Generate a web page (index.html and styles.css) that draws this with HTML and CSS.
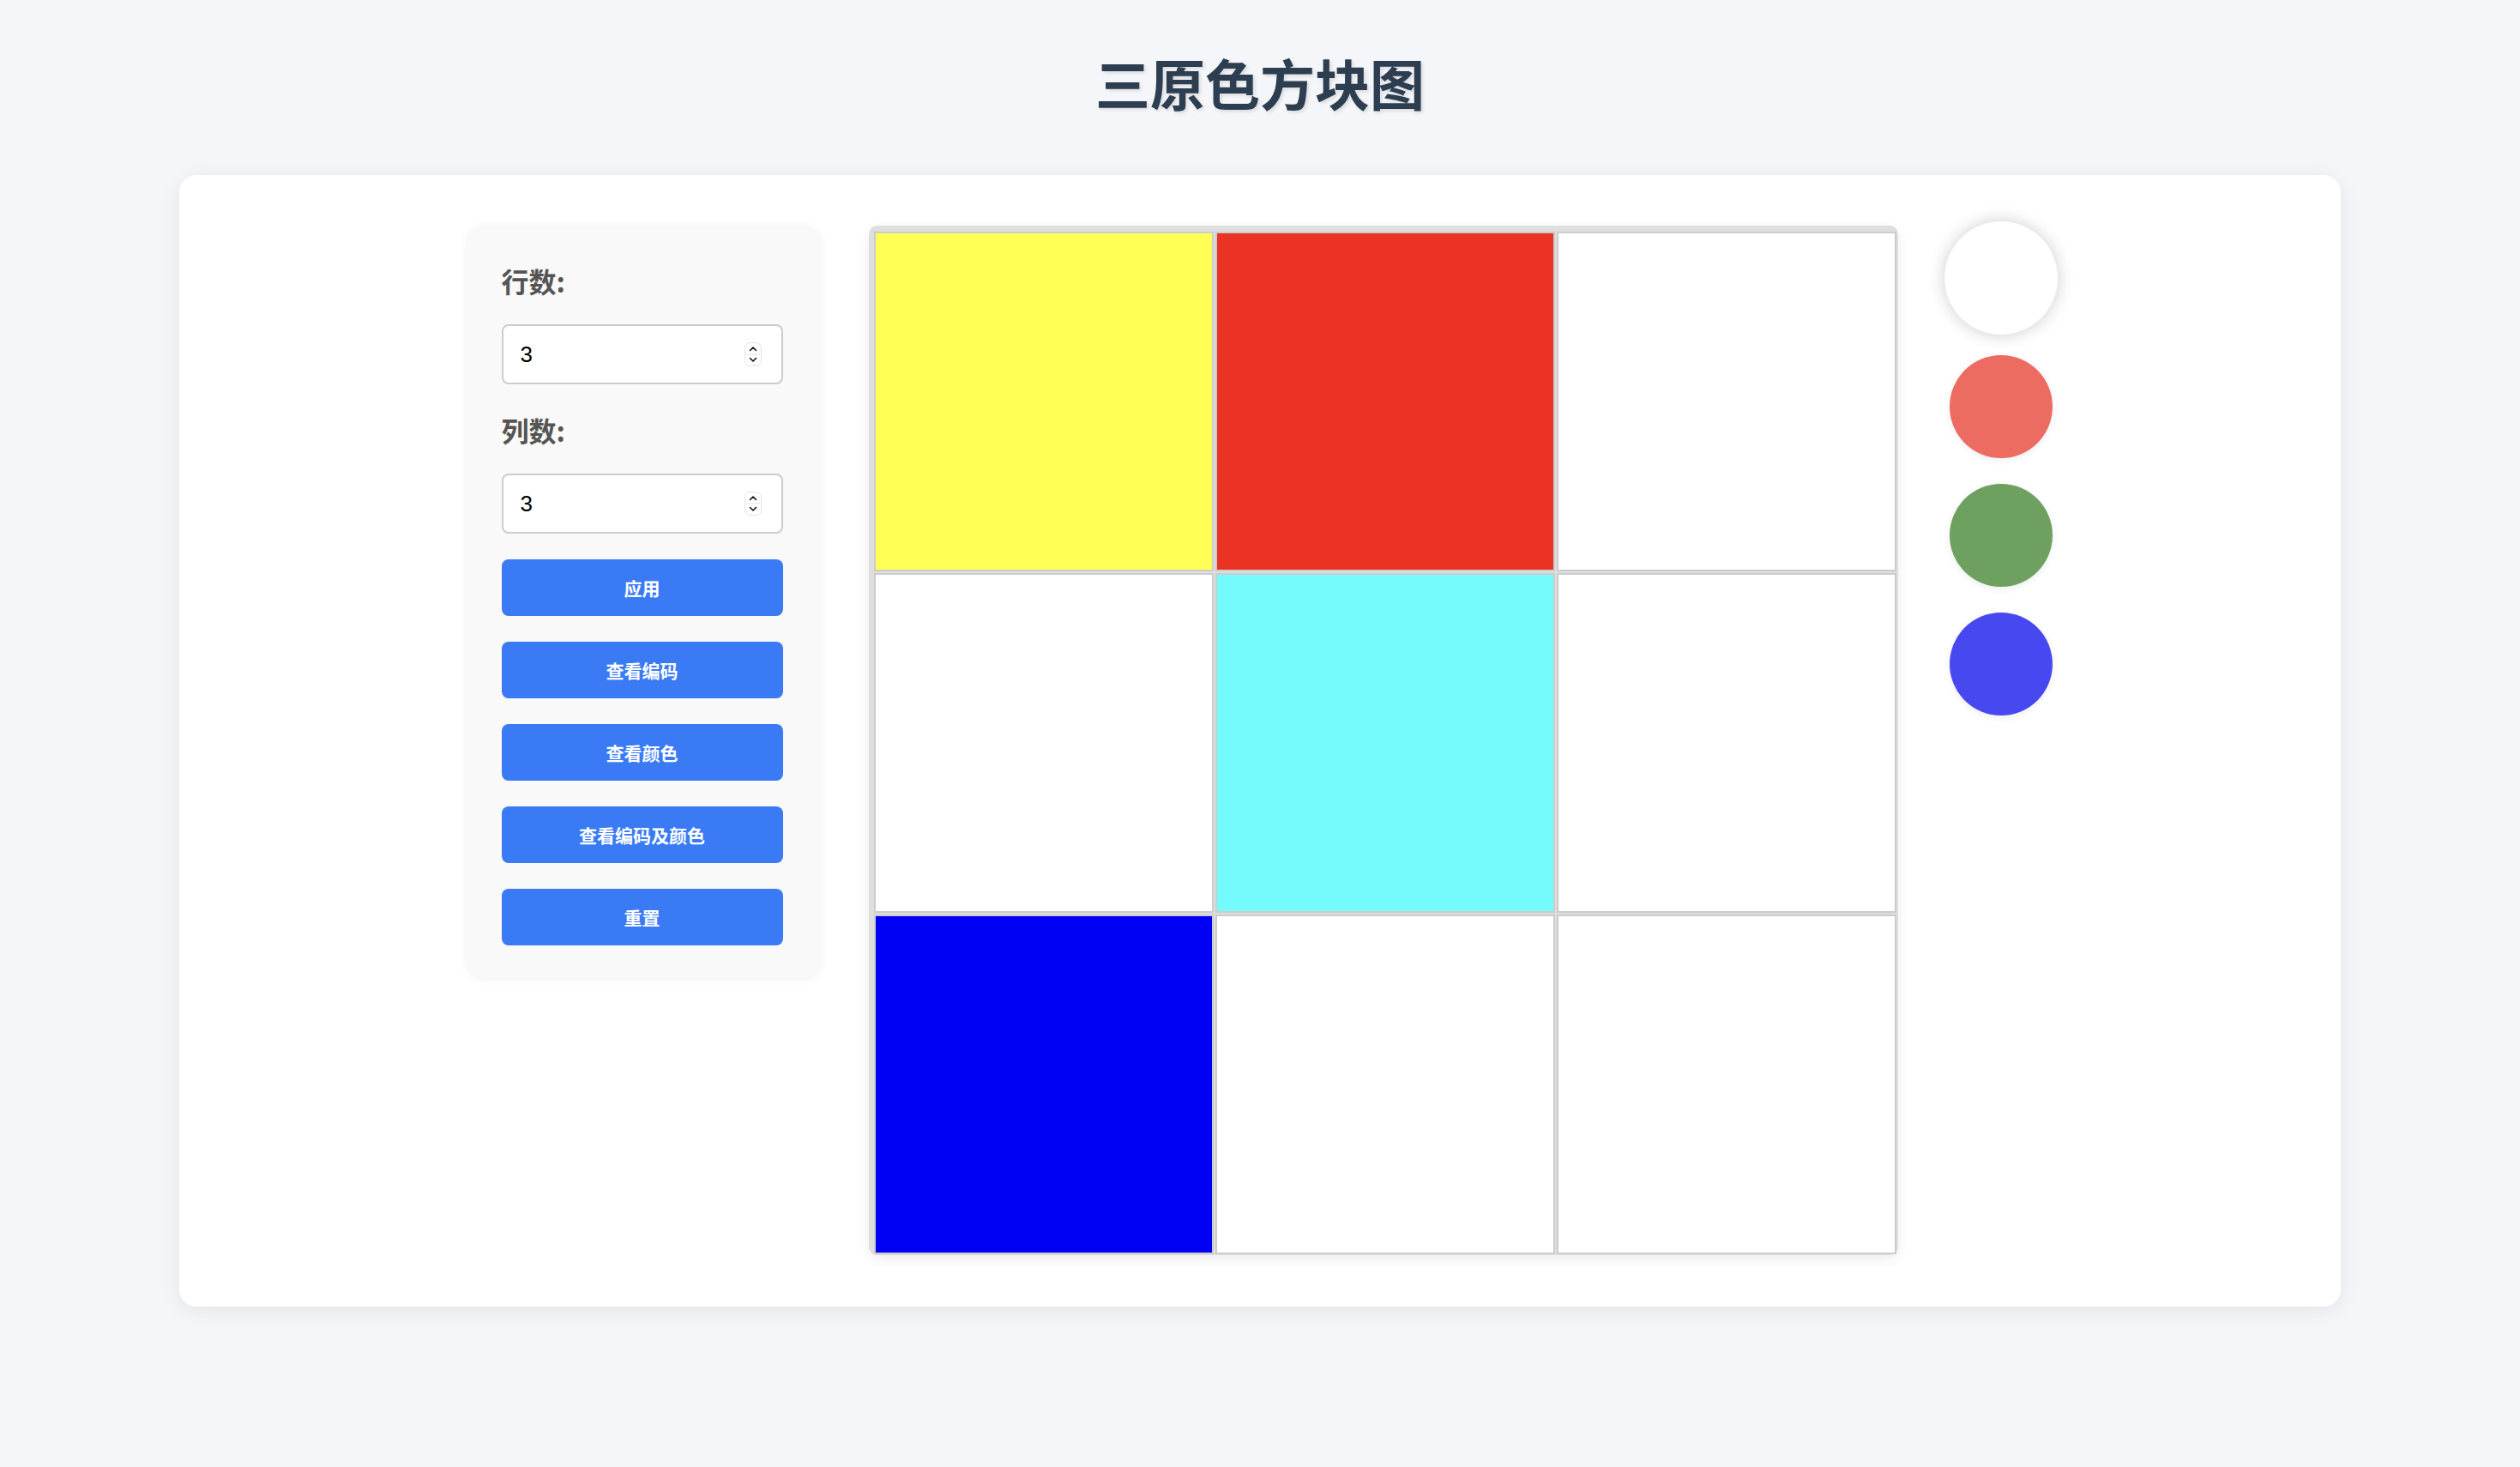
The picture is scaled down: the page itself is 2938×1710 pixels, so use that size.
FILE: index.html
```html
<!DOCTYPE html>
<html lang="zh-CN">
<head>
<meta charset="utf-8">
<title>三原色方块图</title>
<link rel="stylesheet" href="styles.css">
</head>
<body>
<h1 class="title">三原色方块图</h1>
<main class="card">
  <section class="panel">
    <label class="field-label" for="rows">行数:</label>
    <div class="num-field">
      <input class="num-input" id="rows" type="number" value="3">
      <svg class="spinner" width="20" height="28" viewBox="0 0 20 28" aria-hidden="true">
        <rect x="0.5" y="0.5" width="19" height="27" rx="6" fill="#fff" stroke="#e2e2e2"/>
        <line x1="2" y1="14" x2="18" y2="14" stroke="#e2e2e2"/>
        <path d="M6.5 9.5 L10 6 L13.5 9.5" fill="none" stroke="#111" stroke-width="1.6" stroke-linecap="round" stroke-linejoin="round"/>
        <path d="M6.5 18.5 L10 22 L13.5 18.5" fill="none" stroke="#111" stroke-width="1.6" stroke-linecap="round" stroke-linejoin="round"/>
      </svg>
    </div>
    <label class="field-label second" for="cols">列数:</label>
    <div class="num-field">
      <input class="num-input" id="cols" type="number" value="3">
      <svg class="spinner" width="20" height="28" viewBox="0 0 20 28" aria-hidden="true">
        <rect x="0.5" y="0.5" width="19" height="27" rx="6" fill="#fff" stroke="#e2e2e2"/>
        <line x1="2" y1="14" x2="18" y2="14" stroke="#e2e2e2"/>
        <path d="M6.5 9.5 L10 6 L13.5 9.5" fill="none" stroke="#111" stroke-width="1.6" stroke-linecap="round" stroke-linejoin="round"/>
        <path d="M6.5 18.5 L10 22 L13.5 18.5" fill="none" stroke="#111" stroke-width="1.6" stroke-linecap="round" stroke-linejoin="round"/>
      </svg>
    </div>
    <div class="buttons">
      <button class="btn" type="button">应用</button>
      <button class="btn" type="button">查看编码</button>
      <button class="btn" type="button">查看颜色</button>
      <button class="btn" type="button">查看编码及颜色</button>
      <button class="btn" type="button">重置</button>
    </div>
  </section>

  <section class="grid">
    <div class="cell yellow"></div>
    <div class="cell red"></div>
    <div class="cell"></div>
    <div class="cell"></div>
    <div class="cell cyan"></div>
    <div class="cell"></div>
    <div class="cell blue"></div>
    <div class="cell"></div>
    <div class="cell"></div>
  </section>

  <section class="palette">
    <div class="swatch white active"></div>
    <div class="swatch s-red"></div>
    <div class="swatch s-green"></div>
    <div class="swatch s-blue"></div>
  </section>
</main>
</body>
</html>
```

FILE: styles.css
```css
* {
  box-sizing: border-box;
}

html, body {
  margin: 0;
  padding: 0;
}

body {
  background: #f4f6f9;
  font-family: "Noto Sans CJK SC", "Noto Sans", "Liberation Sans", sans-serif;
  color: #333;
  min-height: 1710px;
}

.title {
  margin: 57px 0 70px;
  font-size: 64px;
  line-height: 77px;
  font-weight: 700;
  text-align: center;
  color: #2c3e50;
  text-shadow: 2px 2px 4px rgba(0, 0, 0, 0.12);
}

.card {
  width: 2520px;
  margin: 0 auto;
  background: #ffffff;
  border-radius: 20px;
  box-shadow: 0 4px 24px rgba(0, 0, 0, 0.08);
  padding: 59px 3px 60px 0;
  display: flex;
  justify-content: center;
  align-items: flex-start;
}

.panel {
  width: 415px;
  margin-right: 55px;
  background: #f9f9f9;
  border-radius: 20px;
  box-shadow: 0 0 12px rgba(0, 0, 0, 0.04);
  padding: 40px 45px 40px 42px;
}

.field-label {
  display: block;
  font-size: 32px;
  line-height: 48px;
  font-weight: 700;
  color: #555;
  margin-bottom: 27px;
}

.field-label.second {
  margin-top: 29px;
}

.num-field {
  width: 328px;
  height: 70px;
  border: 2px solid #cccccc;
  border-radius: 8px;
  background: #fff;
  display: flex;
  align-items: center;
  padding: 0 23px 0 20px;
}

.num-input {
  flex: 1;
  min-width: 0;
  border: none;
  outline: none;
  background: transparent;
  padding: 0;
  font-family: "Liberation Sans", Arial, sans-serif;
  font-size: 26px;
  color: #000;
  -moz-appearance: textfield;
}

.num-input::-webkit-inner-spin-button,
.num-input::-webkit-outer-spin-button {
  -webkit-appearance: none;
  margin: 0;
}

.spinner {
  flex: none;
  display: block;
}

.buttons {
  display: flex;
  flex-direction: column;
  gap: 30px;
  margin-top: 30px;
}

.btn {
  width: 328px;
  height: 66px;
  border: none;
  border-radius: 8px;
  background: #3a7bf5;
  color: #ffffff;
  font-family: "Noto Sans CJK SC", "Noto Sans", sans-serif;
  font-size: 21px;
  font-weight: 700;
  padding: 0;
  cursor: pointer;
}

.grid {
  width: 1200px;
  height: 1200px;
  margin-right: 60px;
  margin-top: 0;
  background: #dedede;
  border-radius: 10px;
  box-shadow: 0 4px 14px rgba(0, 0, 0, 0.08);
  padding: 7px 2px 1px 6px;
  display: grid;
  grid-template-columns: repeat(3, 396px);
  grid-template-rows: repeat(3, 396px);
  gap: 2px;
}

.cell {
  background: #ffffff;
  border: 2px solid #cccccc;
}

.cell.yellow { background: #ffff55; }
.cell.red { background: #ea3323; }
.cell.cyan { background: #75fbfd; }
.cell.blue { background: #0000f5; }

.palette {
  width: 120px;
  display: flex;
  flex-direction: column;
  gap: 30px;
  padding-top: 1px;
}

.swatch {
  width: 120px;
  height: 120px;
  border-radius: 50%;
  box-shadow: 0 2px 8px rgba(0, 0, 0, 0.08);
}

.swatch.white { background: #ffffff; }
.swatch.s-red { background: #ec6c62; }
.swatch.s-green { background: #6ea05f; }
.swatch.s-blue { background: #4848f0; }

.swatch.active {
  transform: scale(1.1);
  box-shadow: 0 0 18px rgba(0, 0, 0, 0.2);
}
```
